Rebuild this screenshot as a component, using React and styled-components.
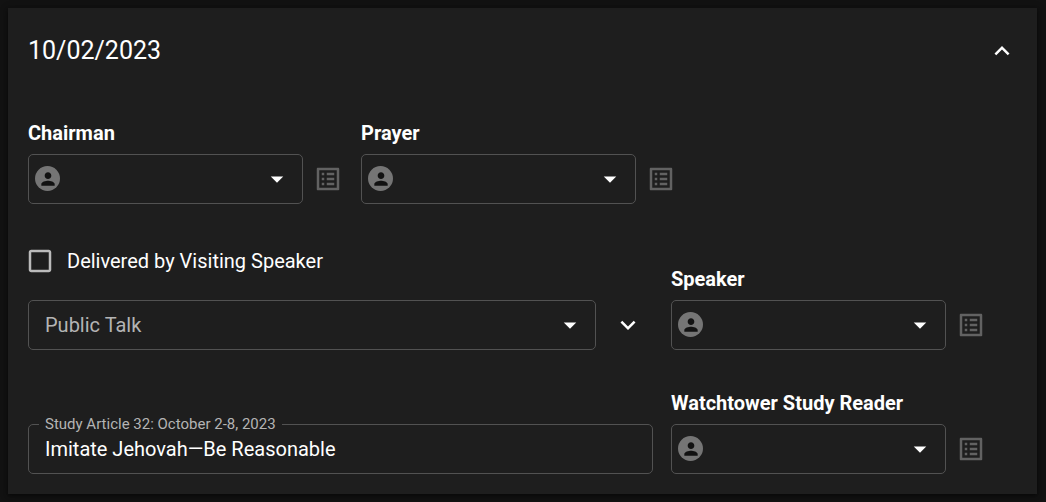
import React, { useState } from "react";
import styled, { createGlobalStyle } from "styled-components";
import {
  MdArrowDropDown,
  MdCheckBox,
  MdCheckBoxOutlineBlank,
  MdExpandLess,
  MdExpandMore,
  MdOutlineListAlt,
  MdPerson,
} from "react-icons/md";

const GlobalStyle = createGlobalStyle`
  *, *::before, *::after { box-sizing: border-box; }
  body {
    margin: 0;
    background: #121212;
    color: #fff;
    font: 400 20px/30px Roboto, "Liberation Sans", sans-serif;
  }
  svg { display: block; flex: none; }
`;

const Page = styled.main`
  padding: 8px 9px 8px 8px;
`;

const Card = styled.section`
  padding: 20px;
  background: #1e1e1e;
  box-shadow: 0 2px 4px rgba(0, 0, 0, 0.4), 0 1px 8px rgba(0, 0, 0, 0.3);
`;

const CardHeader = styled.header`
  display: flex;
  align-items: center;
  justify-content: space-between;
  padding: 7px 0;
`;

const Title = styled.h2`
  margin: 0;
  font-size: 25px;
  font-weight: 400;
  line-height: 32px;
`;

const IconButton = styled.button`
  display: flex;
  align-items: center;
  justify-content: center;
  width: ${({ $width }) => $width || 30}px;
  height: ${({ $height }) => $height || 30}px;
  padding: 0;
  border: 0;
  background: none;
  color: ${({ $muted }) => ($muted ? "#626262" : "#fff")};
  font-size: 30px;
  cursor: pointer;
`;

const Assignments = styled.div`
  display: flex;
  flex-wrap: wrap;
  gap: 18px;
  padding-top: 44px;
`;

const PartRow = styled.div`
  display: grid;
  grid-template-columns: minmax(0, 1fr) 346px;
  column-gap: 18px;
  align-items: end;
  padding-top: ${({ $space }) => $space}px;
`;

const Person = styled.div`
  display: flex;
  flex-direction: column;
  gap: 6px;
`;

const PersonLabel = styled.label`
  font-weight: 700;
`;

const PersonControls = styled.div`
  display: flex;
  align-items: center;
  gap: 10px;
`;

const SelectBox = styled.div`
  position: relative;
  flex: ${({ $fill }) => ($fill ? "1 1 0" : "0 0 275px")};
  min-width: 0;
`;

const Select = styled.select`
  display: block;
  width: 100%;
  height: 50px;
  padding: 0 48px 0 ${({ $avatar }) => ($avatar ? 40 : 16)}px;
  border: 1px solid #525252;
  border-radius: 5px;
  appearance: none;
  background: transparent;
  color: #b4b4b4;
  font: inherit;

  option { background: #1e1e1e; }
`;

const Caret = styled(MdArrowDropDown)`
  position: absolute;
  top: 10px;
  right: 11px;
  font-size: 30px;
  pointer-events: none;
`;

const Avatar = styled.span`
  position: absolute;
  top: 12px;
  left: 7px;
  display: flex;
  align-items: center;
  justify-content: center;
  width: 25px;
  height: 25px;
  border-radius: 50%;
  background: #757575;
  color: #121212;
  font-size: 20px;
  pointer-events: none;
`;

const TalkColumn = styled.div`
  display: flex;
  flex-direction: column;
  gap: 24px;
`;

const TalkControls = styled.div`
  display: flex;
  gap: 7px;
`;

const CheckLabel = styled.label`
  display: flex;
  align-items: center;
  align-self: flex-start;
  gap: 12px;
  margin-left: -3px;
  cursor: pointer;
`;

const CheckMark = styled.span`
  position: relative;
  color: #bbb;
  font-size: 30px;
`;

const CheckInput = styled.input`
  position: absolute;
  inset: 0;
  width: 100%;
  height: 100%;
  margin: 0;
  opacity: 0;
  cursor: pointer;
`;

const TextField = styled.div`
  position: relative;
`;

const FloatingLabel = styled.label`
  position: absolute;
  top: -10px;
  left: 11px;
  padding: 0 6px;
  background: #1e1e1e;
  color: #b4b4b4;
  font-size: 15px;
  line-height: 20px;
`;

const TextInput = styled.input`
  display: block;
  width: 100%;
  height: 50px;
  padding: 0 16px;
  border: 1px solid #525252;
  border-radius: 5px;
  background: transparent;
  color: #fff;
  font: inherit;
`;

function PersonField({ id, label }) {
  return (
    <Person>
      <PersonLabel htmlFor={id}>{label}</PersonLabel>
      <PersonControls>
        <SelectBox>
          <Select id={id} $avatar defaultValue="">
            <option value="" aria-label="None" />
          </Select>
          <Avatar>
            <MdPerson />
          </Avatar>
          <Caret />
        </SelectBox>
        <IconButton type="button" $muted aria-label={`${label} history`}>
          <MdOutlineListAlt />
        </IconButton>
      </PersonControls>
    </Person>
  );
}

export default function App() {
  const [visiting, setVisiting] = useState(false);

  return (
    <>
      <GlobalStyle />
      <Page>
        <Card>
          <CardHeader>
            <Title>10/02/2023</Title>
            <IconButton type="button" aria-label="Collapse week">
              <MdExpandLess />
            </IconButton>
          </CardHeader>
          <Assignments>
            <PersonField id="chairman" label="Chairman" />
            <PersonField id="prayer" label="Prayer" />
          </Assignments>
          <PartRow $space={42}>
            <TalkColumn>
              <CheckLabel>
                <CheckMark>
                  {visiting ? <MdCheckBox /> : <MdCheckBoxOutlineBlank />}
                  <CheckInput
                    type="checkbox"
                    checked={visiting}
                    onChange={(event) => setVisiting(event.target.checked)}
                  />
                </CheckMark>
                Delivered by Visiting Speaker
              </CheckLabel>
              <TalkControls>
                <SelectBox $fill>
                  <Select aria-label="Public Talk" defaultValue="">
                    <option value="">Public Talk</option>
                  </Select>
                  <Caret />
                </SelectBox>
                <IconButton type="button" $width={50} $height={50} aria-label="Show talk details">
                  <MdExpandMore />
                </IconButton>
              </TalkControls>
            </TalkColumn>
            <PersonField id="speaker" label="Speaker" />
          </PartRow>
          <PartRow $space={38}>
            <TextField>
              <TextInput id="study" type="text" defaultValue="Imitate Jehovah—Be Reasonable" />
              <FloatingLabel htmlFor="study">Study Article 32: October 2-8, 2023</FloatingLabel>
            </TextField>
            <PersonField id="reader" label="Watchtower Study Reader" />
          </PartRow>
        </Card>
      </Page>
    </>
  );
}
